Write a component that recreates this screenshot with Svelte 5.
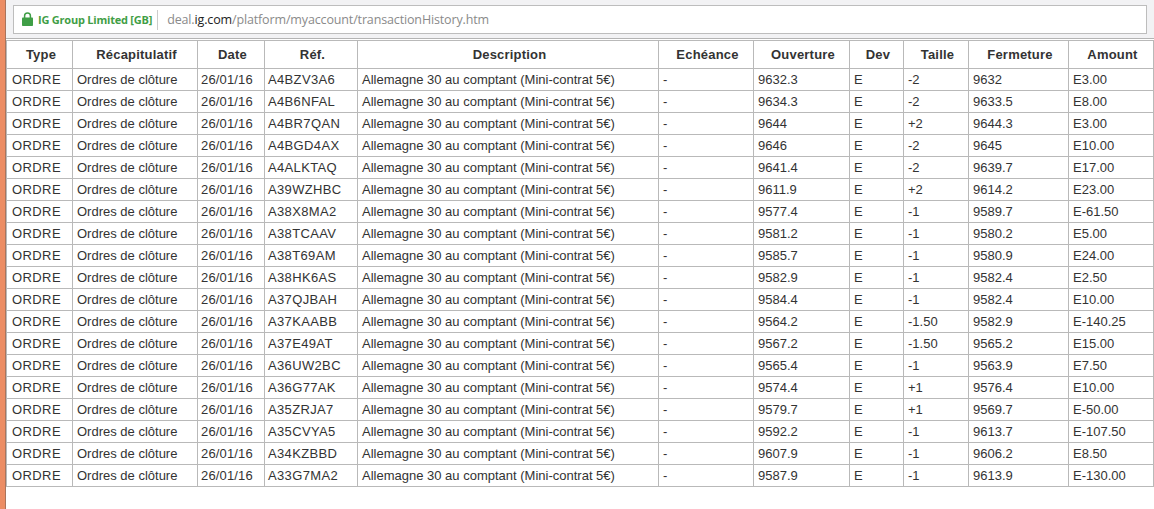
<script>
  const d = `A4BZV3A6 9632.3 -2 9632 E3.00
A4B6NFAL 9634.3 -2 9633.5 E8.00
A4BR7QAN 9644 +2 9644.3 E3.00
A4BGD4AX 9646 -2 9645 E10.00
A4ALKTAQ 9641.4 -2 9639.7 E17.00
A39WZHBC 9611.9 +2 9614.2 E23.00
A38X8MA2 9577.4 -1 9589.7 E-61.50
A38TCAAV 9581.2 -1 9580.2 E5.00
A38T69AM 9585.7 -1 9580.9 E24.00
A38HK6AS 9582.9 -1 9582.4 E2.50
A37QJBAH 9584.4 -1 9582.4 E10.00
A37KAABB 9564.2 -1.50 9582.9 E-140.25
A37E49AT 9567.2 -1.50 9565.2 E15.00
A36UW2BC 9565.4 -1 9563.9 E7.50
A36G77AK 9574.4 +1 9576.4 E10.00
A35ZRJA7 9579.7 +1 9569.7 E-50.00
A35CVYA5 9592.2 -1 9613.7 E-107.50
A34KZBBD 9607.9 -1 9606.2 E8.50
A33G7MA2 9587.9 -1 9613.9 E-130.00`;
  const rows = d.split('\n').map((l) => l.split(' '));
  const heads = ['Type','Récapitulatif','Date','Réf.','Description','Echéance','Ouverture','Dev','Taille','Fermeture','Amount'];
  const widths = [66,125,67,93,301,95,96,54,65,100,85];
</script>

<div class="page">
  <div class="strip"></div>
  <div class="main">
    <div class="toolbar">
      <div class="omnibox">
        <svg class="lock" width="11" height="14" viewBox="0 0 11 14">
          <path d="M2.6 6V3.8a2.9 2.9 0 0 1 5.8 0V6" fill="none" stroke="#3f9e46" stroke-width="1.5"/>
          <rect x="0" y="5.5" width="11" height="8.5" rx="0.8" fill="#3f9e46"/>
        </svg>
        <span class="ev">IG Group Limited [GB]</span>
        <span class="sep"></span>
        <span class="url"><span class="dim">deal.</span><span class="host">ig.com</span><span class="dim">/platform/myaccount/transactionHistory.htm</span></span>
      </div>
    </div>
    <table>
      <colgroup>
        {#each widths as w}<col style="width:{w}px" />{/each}
      </colgroup>
      <thead>
        <tr>{#each heads as h}<th>{h}</th>{/each}</tr>
      </thead>
      <tbody>
        {#each rows as r}
          <tr>
            <td class="kind">ORDRE</td>
            <td>Ordres de clôture</td>
            <td class="date">26/01/16</td>
            <td class="ref">{r[0]}</td>
            <td>Allemagne 30 au comptant (Mini-contrat 5€)</td>
            <td>-</td>
            <td>{r[1]}</td>
            <td>E</td>
            <td>{r[2]}</td>
            <td>{r[3]}</td>
            <td>{r[4]}</td>
          </tr>
        {/each}
      </tbody>
    </table>
  </div>
</div>

<style>
  :global(body) { margin: 0; background: #fff; }
  .page { display: flex; width: 1154px; height: 509px; overflow: hidden; font-family: "Liberation Sans", Arial, sans-serif; }
  .strip { width: 5px; flex: none; background: #ec8d64; border-right: 1px solid #a9745c; }
  .main { flex: 1; min-width: 0; }
  .toolbar { height: 39px; box-sizing: border-box; padding: 5px 7px 0 7px; background: #f2f2f4; border-bottom: 1px solid #b4b4b4; }
  .omnibox { height: 29px; box-sizing: border-box; display: flex; align-items: center; padding-left: 8px; background: #fff; border: 1px solid #bdbdbd; }
  .lock { flex: none; margin-top: -1px; }
  .ev { margin-left: 5px; font: bold 11px "Open Sans", sans-serif; letter-spacing: -0.22px; color: #3f9e46; white-space: nowrap; }
  .sep { width: 1px; height: 20px; margin: 0 9px 0 5px; background: #ccc; }
  .url { font: 12.5px "Open Sans", sans-serif; letter-spacing: -0.14px; white-space: nowrap; }
  .dim { color: #8a8a8a; }
  .host { color: #222; }
  table { border-collapse: collapse; table-layout: fixed; width: 1147px; margin-top: 1px; font-size: 13px; color: #333; }
  th, td { border: 1px solid #b9b9b9; padding: 0 5px 0 4px; white-space: nowrap; overflow: hidden; box-sizing: border-box; }
  th { height: 28px; padding: 0 3px 0 6px; font-weight: bold; text-align: center; letter-spacing: 0.2px; }
  td { height: 22px; }
  td.kind { padding-left: 5px; letter-spacing: 0.4px; }
  td.date { padding-left: 3px; letter-spacing: 0.15px; }
  td.ref { padding-left: 3px; letter-spacing: 0.35px; }
</style>
